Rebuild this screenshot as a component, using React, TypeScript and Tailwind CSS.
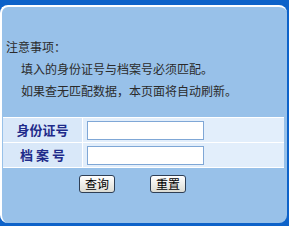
import React from 'react';

const font = { fontFamily: '"Noto Sans CJK SC", sans-serif' };

const Row = ({ label }: { label: string }) => (
  <div className="flex h-[25px] border-b border-white">
    <div className="w-[80px] bg-[#d9e8f9] flex items-center justify-center text-[13px] font-bold text-[#1f2b8a] border-r border-white">
      {label}
    </div>
    <div className="flex-1 bg-[#e2eefb] flex items-center pl-[4px]">
      <input className="w-[117px] h-[19px] bg-white border border-[#7fa7d6] outline-none" />
    </div>
  </div>
);

const App = () => {
  return (
    <div className="w-[289px] h-[226px] bg-[#0d62c9] pt-[5px] pr-[2px] pb-[3px]" style={font}>
      <div className="h-full bg-[#98c1e9] border-l-2 border-t-2 border-white rounded-[8px] pt-[29px] text-[12px] text-[#2b2b2b]">
        <div className="pl-[4px]">
          <p className="h-[22px] flex items-center">注意事项：</p>
          <p className="h-[22px] flex items-center pl-[15px]">填入的身份证号与档案号必须匹配。</p>
          <p className="h-[22px] flex items-center pl-[15px]">如果查无匹配数据，本页面将自动刷新。</p>
        </div>
        <div className="mt-[15px] ml-[1px] mr-[3px] border-t border-white">
          <Row label="身份证号" />
          <Row label="档 案 号" />
        </div>
        <div className="flex gap-[35px] pl-[77px] mt-[7px]">
          <button className="w-[36px] h-[18px] rounded-[3px] border border-[#2f3f55] bg-gradient-to-b from-white to-[#dcdcd4] text-[12px] leading-none text-black">查询</button>
          <button className="w-[36px] h-[18px] rounded-[3px] border border-[#2f3f55] bg-gradient-to-b from-white to-[#dcdcd4] text-[12px] leading-none text-black">重置</button>
        </div>
      </div>
    </div>
  );
};

export default App;
